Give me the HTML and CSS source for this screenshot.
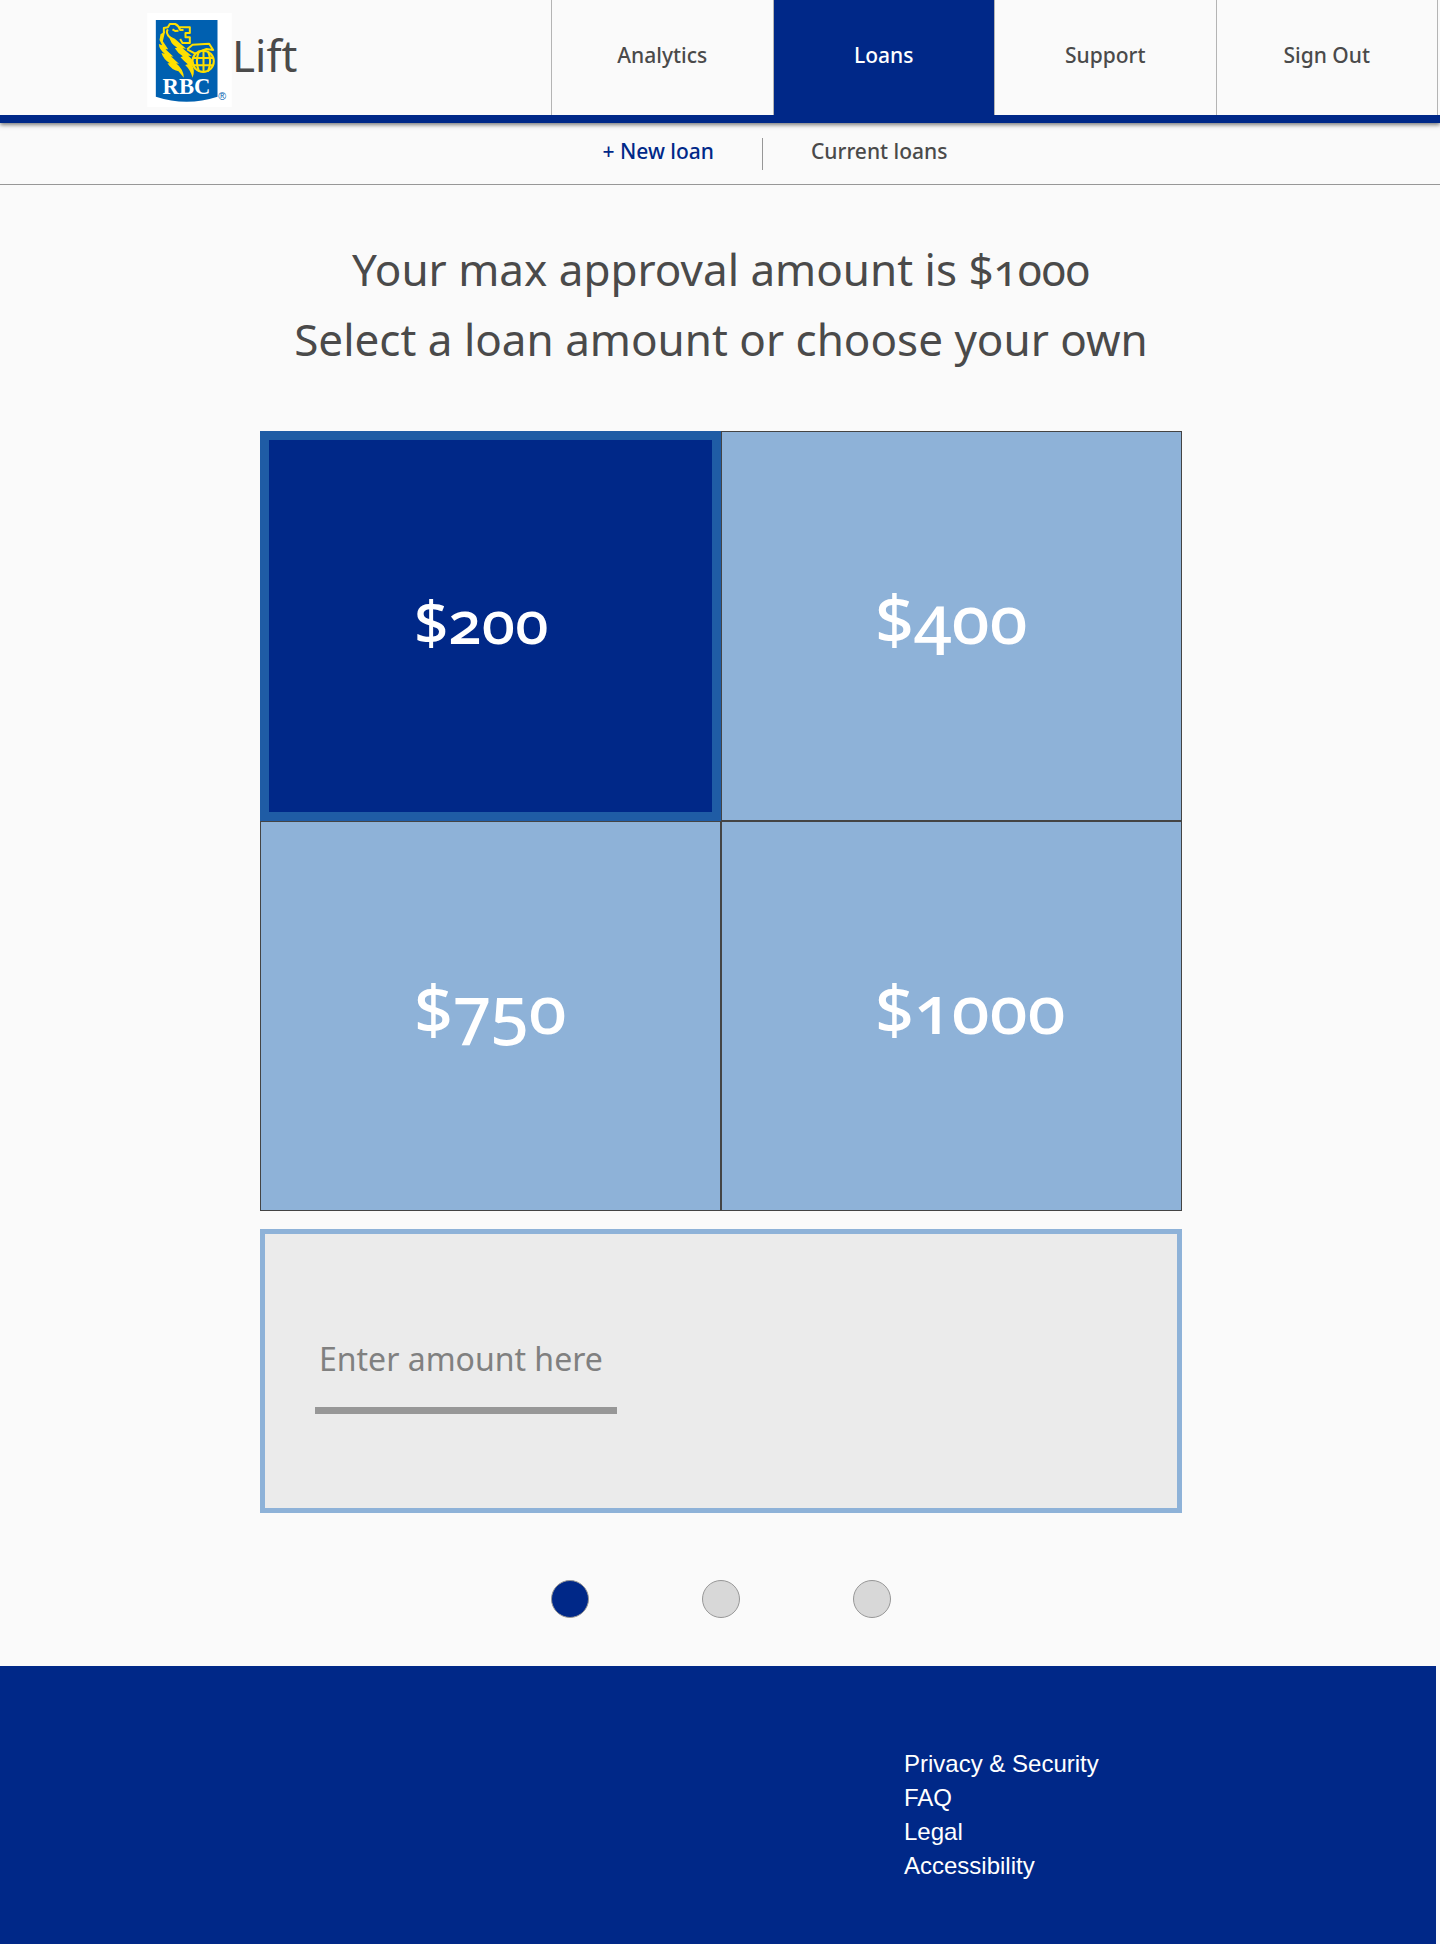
FILE: index.html
```html
<!DOCTYPE html>
<html lang="en">
<head>
<meta charset="utf-8">
<meta name="viewport" content="width=device-width, initial-scale=1">
<title>RBC Lift – New loan</title>
<link rel="stylesheet" href="styles.css">
</head>
<body>
<header class="site-header">
  <a class="brand" href="#">
    <svg class="brand-logo" viewBox="22 39 254 282" role="img" aria-label="RBC">
      <rect x="22" y="39" width="254" height="282" fill="#fff"/>
      <path d="M48 60H233V290Q140 320 48 290Z" fill="#0060b0"/>
      <g fill="none" stroke="#fedf01" stroke-width="6" stroke-linejoin="round">
        <path d="M72 100V84L84 82 90 72H106Q117 77 121 90H131M119 82H150V99H137V112H150V129H128L121 117M98 88 106 93 116 92M84 88Q76 98 90 112L128 143"/>
        <path d="M142 148 158 134 208 131 220 150 200 147 186 152M142 148 166 161 188 151"/>
        <circle cx="190" cy="184" r="32"/>
        <path d="M191 150V217M159 174H221M162 196H218M178 153Q164 184 178 215M204 153Q218 184 204 215"/>
      </g>
      <g fill="#fedf01">
        <path d="M76 94 62 103 59 120 67 136 57 132Q58 149 75 161L65 159Q71 178 90 190L83 190Q95 210 116 214L132 233Q131 208 109 190L118 192 93 169 101 170 77 148 85 148 69 124Z"/>
        <path d="M88 108Q90 130 112 143L105 145Q114 160 129 169L122 172Q133 184 144 193L136 195Q152 210 158 233Q167 214 157 195L166 211Q168 184 145 167L156 168 128 145 139 146 105 116Z"/>
      </g>
      <text class="brand-letters" x="140" y="281" text-anchor="middle">RBC</text>
      <text class="brand-mark" x="247" y="300" text-anchor="middle">®</text>
    </svg>
    <span class="brand-name">Lift</span>
  </a>
  <nav class="main-nav" aria-label="Main">
    <a class="main-link" href="#">Analytics</a>
    <a class="main-link main-link-active" href="#" aria-current="page">Loans</a>
    <a class="main-link" href="#">Support</a>
    <a class="main-link" href="#">Sign Out</a>
  </nav>
</header>
<nav class="sub-nav" aria-label="Loans">
  <a class="sub-link sub-link-active" href="#">+ New loan</a>
  <a class="sub-link" href="#">Current loans</a>
</nav>
<main class="content">
  <h1 class="title">Your max approval amount is $1000<br>Select a loan amount or choose your own</h1>
  <div class="amounts">
    <button class="amount amount-selected" type="button" aria-pressed="true">$200</button>
    <button class="amount" type="button" aria-pressed="false">$400</button>
    <button class="amount" type="button" aria-pressed="false">$750</button>
    <button class="amount" type="button" aria-pressed="false">$1000</button>
  </div>
  <div class="custom">
    <input class="custom-input" type="text" aria-label="Loan amount" placeholder="Enter amount here">
  </div>
  <div class="steps">
    <button class="step step-current" type="button" aria-label="Step 1"></button>
    <button class="step" type="button" aria-label="Step 2"></button>
    <button class="step" type="button" aria-label="Step 3"></button>
  </div>
</main>
<footer class="site-footer">
  <nav class="footer-nav" aria-label="Footer">
    <a class="footer-link" href="#">Privacy &amp; Security</a>
    <a class="footer-link" href="#">FAQ</a>
    <a class="footer-link" href="#">Legal</a>
    <a class="footer-link" href="#">Accessibility</a>
  </nav>
</footer>
</body>
</html>
```
FILE: styles.css
```css
* {
  box-sizing: border-box;
}

body {
  margin: 0;
  background: #fafafa;
  color: #4a4a4a;
  font-family: "Noto Sans", "Open Sans", sans-serif;
  font-variant-numeric: oldstyle-nums;
}

a {
  color: inherit;
  text-decoration: none;
}

button,
input {
  font: inherit;
}

.site-header {
  display: flex;
  justify-content: space-between;
  height: 123px;
  padding-right: 2px;
  border-bottom: 8px solid #002888;
  box-shadow: 0 2px 4px rgba(0, 0, 0, 0.5);
}

.brand {
  display: flex;
  align-items: flex-start;
  padding: 13px 0 0 147px;
}

.brand-logo {
  width: 85px;
  height: 94px;
}

.brand-letters {
  fill: #fff;
  font: bold 68px "Liberation Serif", "Times New Roman", serif;
}

.brand-mark {
  fill: #0060b0;
  font: 32px "Liberation Sans", sans-serif;
}

.brand-name {
  font-size: 44px;
  line-height: 84px;
}

.main-nav {
  display: grid;
  grid-template-columns: repeat(4, 1fr);
  width: 887px;
  border-right: 1px solid #b4b4b4;
}

.main-link {
  display: flex;
  align-items: center;
  justify-content: center;
  padding-bottom: 6px;
  border-left: 1px solid #b4b4b4;
  font-size: 21px;
  font-weight: 500;
}

.main-link-active {
  background: #002888;
  color: #fff;
}

.sub-nav {
  display: flex;
  align-items: center;
  justify-content: center;
  height: 62px;
  padding-left: 110px;
  border-bottom: 1px solid #979797;
  font-size: 21px;
  font-weight: 500;
  line-height: 26px;
}

.sub-link {
  padding: 0 48px 6px;
}

.sub-link + .sub-link {
  border-left: 1px solid #979797;
}

.sub-link-active {
  color: #002888;
}

.content {
  display: flex;
  flex-direction: column;
  align-items: center;
  padding: 49px 24px 48px 26px;
}

.title {
  margin: 0 0 57px;
  font-size: 44px;
  font-weight: 400;
  line-height: 70px;
  text-align: center;
}

.amounts {
  display: grid;
  grid-template-columns: 1fr 1fr;
  width: 100%;
  max-width: 922px;
}

.amount {
  height: 390px;
  padding: 0 0 18px 153px;
  border: 1px solid #444;
  background: #8eb2d8;
  color: #fff;
  font-size: 68px;
  font-weight: 500;
  text-align: left;
}

.amount-selected {
  padding: 0 0 10px 145px;
  border: 9px solid #1f5ca5;
  background: #002888;
  font-size: 60px;
}

.custom {
  width: 100%;
  max-width: 922px;
  margin-top: 18px;
  padding: 90px 50px 94px;
  border: 5px solid #8eb2d8;
  background: #ebebeb;
}

.custom-input {
  display: block;
  width: 302px;
  height: 90px;
  padding: 0 0 14px 4px;
  border: 0;
  border-bottom: 7px solid #979797;
  background: transparent;
  color: #4a4a4a;
  font-size: 32px;
}

.custom-input::placeholder {
  color: #808080;
  opacity: 1;
}

.steps {
  display: flex;
  gap: 113px;
  margin-top: 67px;
}

.step {
  width: 38px;
  height: 38px;
  padding: 0;
  border: 1px solid #979797;
  border-radius: 50%;
  background: #d8d8d8;
}

.step-current {
  background: #002888;
}

.site-footer {
  display: grid;
  grid-template-columns: 904fr 532fr;
  margin-right: 4px;
  padding: 81px 0 61px;
  background: #002888;
}

.footer-nav {
  display: flex;
  flex-direction: column;
  grid-column: 2;
}

.footer-link {
  color: #fff;
  font-family: "Liberation Sans", Arial, sans-serif;
  font-size: 24px;
  line-height: 34px;
}
```
